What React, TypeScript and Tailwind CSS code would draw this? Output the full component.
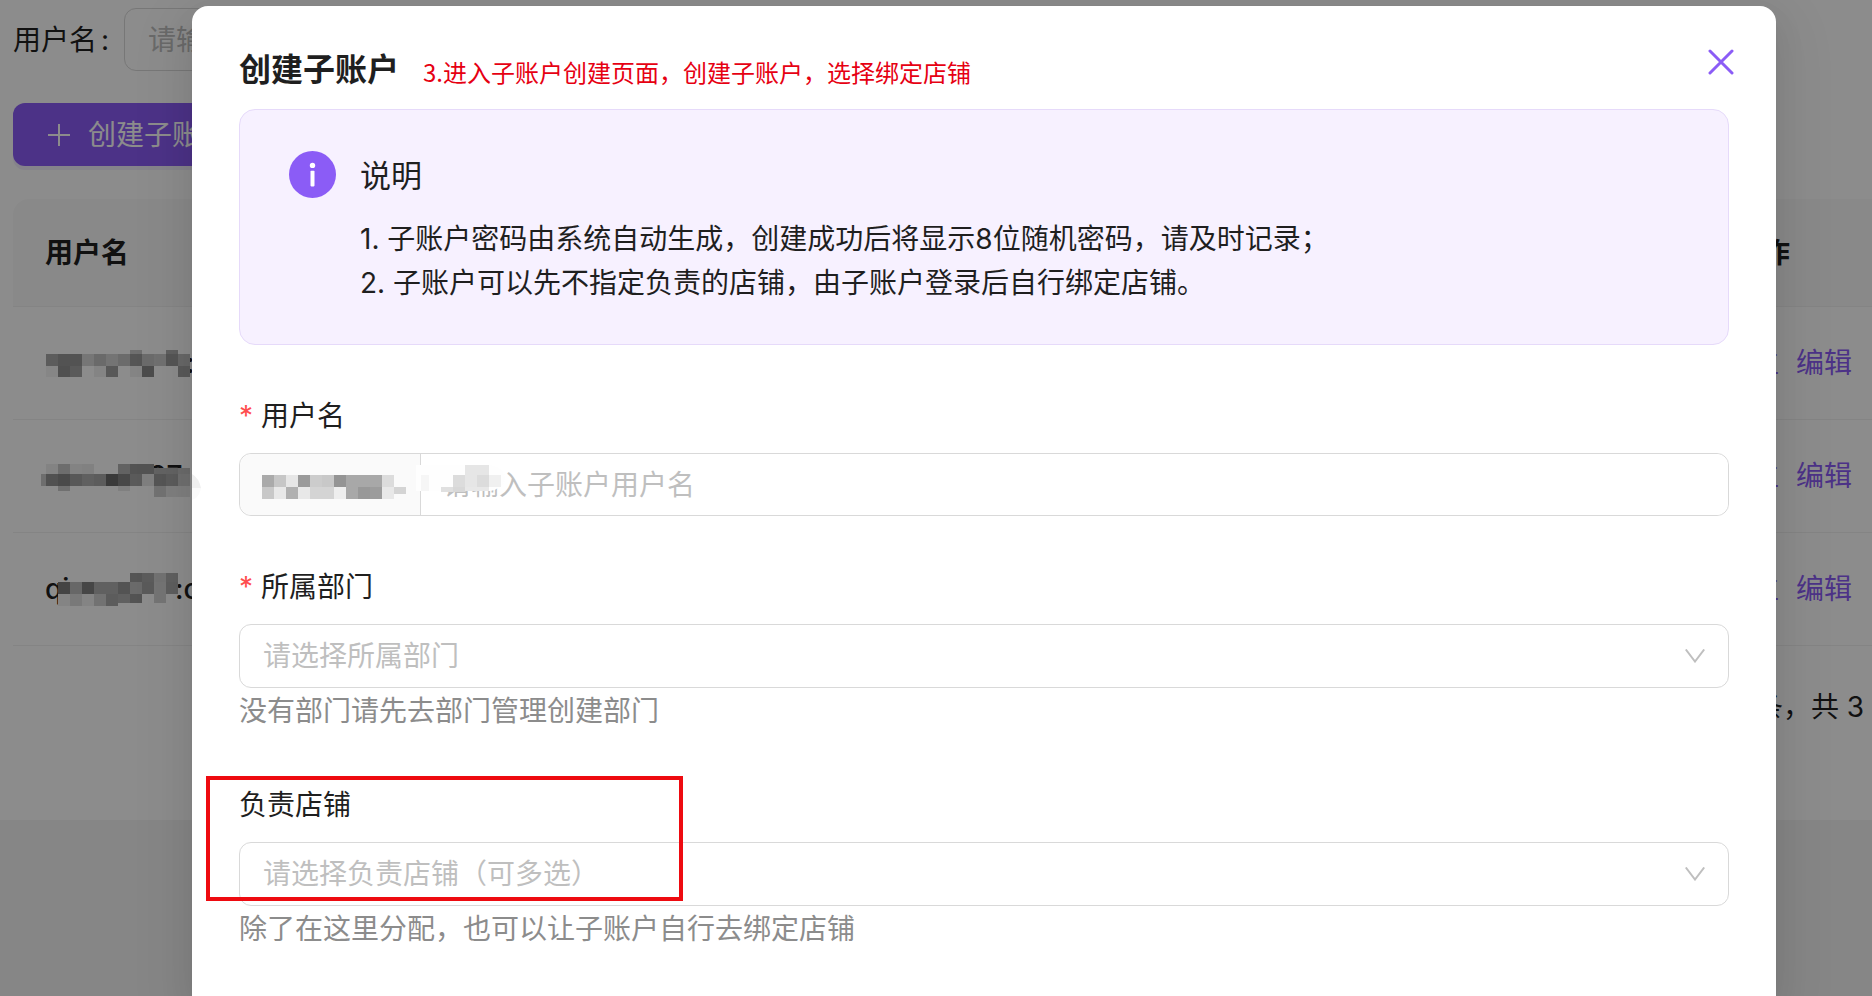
import type { ReactNode } from 'react';

type Band = { x: number; y: number; h: number; cells: string[] };

const CELL = 12;

/* Privacy mosaic: bands of 12px blocks; an empty string leaves a gap. */
function Mosaic({ bands, width, height, className }: { bands: Band[]; width: number; height: number; className: string }) {
  return (
    <svg aria-hidden="true" width={width} height={height} viewBox={`0 0 ${width} ${height}`} shapeRendering="crispEdges" className={className}>
      {bands.map((b, i) =>
        b.cells.map((c, j) =>
          c ? <rect key={`${i}-${j}`} x={b.x + j * CELL} y={b.y} width={CELL} height={b.h} fill={`#${c}${c}${c}`} /> : null,
        ),
      )}
    </svg>
  );
}

const rowMosaics: { bands: Band[]; before?: string; after: string; afterClass: string }[] = [
  {
    after: ':',
    afterClass: 'absolute left-[145px]',
    bands: [
      { x: 5, y: 8, h: 4, cells: ['', '', '', '', '', '', '', 'ca', '', '', 'b0'] },
      { x: 5, y: 12, h: 12, cells: ['a8', '98', '98', 'd7', 'c2', 'd4', 'c4', '9c', 'c4', 'cc', '9c', 'be'] },
      { x: 5, y: 24, h: 11, cells: ['f4', '92', 'a4', '', 'f0', 'a0', '', 'f0', '8a', '', '', 'a4'] },
    ],
  },
  {
    after: '37:',
    afterClass: 'absolute left-[108px]',
    bands: [
      { x: 5, y: 9, h: 10, cells: ['ee', 'c6', 'ee', 'ec', '', '', 'b2', '98', '98'] },
      { x: 113, y: 13, h: 6, cells: ['b4', 'b4', 'c4'] },
      { x: 0, y: 19, h: 12, cells: ['c8'] },
      { x: 5, y: 19, h: 12, cells: ['94', '88', 'a0', 'b0', 'a8', '6a', '84', 'a4', 'e8', '9c', 'a8', 'cc'] },
      { x: 5, y: 31, h: 5, cells: ['', 'cc', '', '', '', '', 'ea', '', '', 'd0', 'e8', 'e8'] },
      { x: 5, y: 36, h: 6, cells: ['', '', '', '', '', '', '', '', '', 'd0', 'e8', 'e8'] },
    ],
  },
  {
    before: 'qi',
    after: ':c',
    afterClass: 'absolute left-[134px]',
    bands: [
      { x: 5, y: 5, h: 9, cells: ['', '', '', '', '', '', '', '9c', 'a8', 'd0', 'b0'] },
      { x: 17, y: 14, h: 12, cells: ['7c', 'bc', '80', 'b0', 'b0', '98', 'c2', 'a4', 'd4', 'ac'] },
      { x: 17, y: 26, h: 9, cells: ['f0', 'dc', 'f0', 'd0', 'a8', 'b0', '98', '', 'd4'] },
      { x: 17, y: 35, h: 3, cells: ['f0', 'dc', 'f0', 'd0', 'a8'] },
    ],
  },
];

const prefixMosaic: Band[] = [
  { x: 0, y: 0, h: 12, cells: ['aa', 'c6', 'e6', '9a', 'cc', 'c8', '94', 'a8', 'a8', 'a8', 'dc'] },
  { x: 0, y: 12, h: 12, cells: ['c8', 'e8', 'b0', 'e8', 'd4', 'd4', 'ee', 'a8', '98', '9c', 'e8'] },
  { x: 132, y: 12, h: 7, cells: ['d4'] },
];

function Chevron() {
  return (
    <svg aria-hidden="true" width="20" height="14" viewBox="0 0 20 14" fill="none" stroke="#bfbfbf" strokeWidth="2" className="pointer-events-none absolute right-6 top-[25px]">
      <path d="M0.8 0.5 L10 12.5 L19.2 0.5" />
    </svg>
  );
}

function FieldLabel({ id, required, children }: { id: string; required?: boolean; children: ReactNode }) {
  return (
    <label htmlFor={id} className="mb-4 flex h-[42px] items-center leading-[42px]">
      {required && <span className="mr-2 w-[14px] font-['Inter',sans-serif] text-[#ff4d4f]">*</span>}
      {children}
    </label>
  );
}

function SelectField({ id, label, required, placeholder, hint, children }: { id: string; label: string; required?: boolean; placeholder: string; hint: string; children?: ReactNode }) {
  return (
    <div className="relative mt-[50px]">
      <FieldLabel id={id} required={required}>{label}</FieldLabel>
      <div className="relative">
        <select id={id} defaultValue="" className="block h-16 w-full appearance-none rounded-xl border border-[#d9d9d9] bg-white pl-[23px] pr-14 text-[#bfbfbf] outline-none">
          <option value="">{placeholder}</option>
        </select>
        <Chevron />
      </div>
      <p className="leading-[46px] text-[#8c8c8c]">{hint}</p>
      {children}
    </div>
  );
}

function AccountsPage() {
  return (
    <main className="h-full bg-[#f5f5f5]">
      <section className="bg-white pb-[92px] pl-[13px] pt-2">
        <div className="flex items-center">
          <label htmlFor="search" className="w-[111px] shrink-0">
            用户名<span className="ml-1">:</span>
          </label>
          <input id="search" placeholder="请输入" className="h-[63px] w-80 rounded-xl border border-[#d9d9d9] bg-white px-[23px] placeholder:text-[#bfbfbf]" />
        </div>
        <button type="button" className="mt-8 flex h-[63px] items-center rounded-xl bg-[#8b5cf6] pl-[34px] pr-8 text-white shadow-[0_4px_0_rgba(139,92,246,0.1)]">
          <svg aria-hidden="true" width="24" height="24" viewBox="0 0 24 24" stroke="currentColor" strokeWidth="2" className="mr-[17px]">
            <path d="M12 1V23M1 12H23" />
          </svg>
          创建子账户
        </button>
        <table className="mt-[33px] w-full border-separate border-spacing-0 text-left">
          <thead>
            <tr className="h-[108px]">
              <th className="rounded-tl-2xl border-b border-[#f0f0f0] bg-[#fafafa] pl-8 font-bold">用户名</th>
              <th className="w-[170px] border-b border-[#f0f0f0] bg-[#fafafa] pl-8 font-bold">操作</th>
            </tr>
          </thead>
          <tbody>
            {rowMosaics.map((row, i) => (
              <tr key={i} className="h-[113px]">
                <td className="border-b border-[#f0f0f0] pl-7">
                  <div className="relative h-[42px] w-[160px] font-medium leading-[42px]">
                    {row.before && <span className="absolute left-1">{row.before}</span>}
                    <span className={row.afterClass}>{row.after}</span>
                    <Mosaic bands={row.bands} width={150} height={42} className="absolute left-0 top-0" />
                  </div>
                </td>
                <td className="border-b border-[#f0f0f0] pl-[21px]">
                  <div className="flex gap-[17px] whitespace-nowrap text-[#8b5cf6]">
                    <a href="#post">岗位</a>
                    <a href="#edit">编辑</a>
                  </div>
                </td>
              </tr>
            ))}
          </tbody>
        </table>
        <p className="-mr-7 whitespace-nowrap pt-10 text-right leading-[42px]">第 1-3 条，共 3 条</p>
      </section>
    </main>
  );
}

function CreateDialog() {
  return (
    <div role="dialog" aria-labelledby="dialog-title" className="relative min-h-full w-full rounded-t-2xl bg-white px-[47px] pt-[42px] shadow-[0_12px_32px_0_rgba(0,0,0,0.08),0_6px_12px_-8px_rgba(0,0,0,0.12),0_18px_56px_16px_rgba(0,0,0,0.05)]">
      <header className="flex h-11 items-center">
        <h2 id="dialog-title" className="text-[32px] font-bold leading-[44px]">创建子账户</h2>
        <p className="ml-6 mt-1 font-['Noto_Sans_CJK_SC',sans-serif] text-2xl text-[#e60012]">3.进入子账户创建页面，创建子账户，选择绑定店铺</p>
        <button type="button" aria-label="关闭" className="-mr-2 mb-4 ml-auto flex size-8 items-center justify-center text-[#8b5cf6]">
          <svg aria-hidden="true" width="26" height="26" viewBox="0 0 26 26" fill="none" stroke="currentColor" strokeWidth="3" strokeLinecap="round">
            <path d="M2 2L24 24M24 2L2 24" />
          </svg>
        </button>
      </header>

      <section className="mt-[17px] flex gap-6 rounded-2xl border border-[#e6dafa] bg-[#f7f1ff] pb-[39px] pl-[49px] pr-8 pt-11">
        <svg aria-hidden="true" width="47" height="47" viewBox="0 0 47 47" className="-mt-[3px] shrink-0">
          <circle cx="23.5" cy="23.5" r="23.5" fill="#8b5cf6" />
          <circle cx="23.5" cy="14.4" r="2.7" fill="#fff" />
          <rect x="21.5" y="19.8" width="4" height="15.6" rx="0.8" fill="#fff" />
        </svg>
        <div>
          <h3 className="text-[31px] leading-[44px]">说明</h3>
          <div className="mt-[19px] leading-[44px]">
            <p>1. 子账户密码由系统自动生成，创建成功后将显示8位随机密码，请及时记录；</p>
            <p>2. 子账户可以先不指定负责的店铺，由子账户登录后自行绑定店铺。</p>
          </div>
        </div>
      </section>

      <form>
        <div className="mt-[50px]">
          <FieldLabel id="username" required>用户名</FieldLabel>
          <div className="relative flex h-[63px] rounded-xl border border-[#d9d9d9]">
            <div className="flex w-[181px] shrink-0 items-center rounded-l-xl border-r border-[#d9d9d9] bg-[#fafafa] pl-[22px]">
              <Mosaic bands={prefixMosaic} width={144} height={24} className="mt-1" />
            </div>
            <input id="username" placeholder="请输入子账户用户名" className="min-w-0 flex-1 rounded-r-xl bg-white px-[22px] outline-none placeholder:text-[#bfbfbf]" />
            <svg aria-hidden="true" width="96" height="30" viewBox="0 0 96 30" className="absolute left-[176px] top-[10px]">
              <path d="M0 1L74 1Q88 4 89 15Q86 25 74 27L0 27Z" fill="#fefefe" />
              <g shapeRendering="crispEdges">
                <rect x="5" y="11" width="8" height="16" fill="#f6f6f6" />
                <rect x="49" y="1" width="24" height="10" fill="#e6e6e6" />
                <rect x="37" y="11" width="12" height="12" fill="#dcdcdc" />
                <rect x="49" y="11" width="12" height="12" fill="#e6e6e6" />
                <rect x="61" y="11" width="12" height="12" fill="#dcdcdc" />
                <rect x="73" y="11" width="12" height="12" fill="#f0f0f0" />
                <rect x="25" y="23" width="12" height="5" fill="#e0e0e0" />
                <rect x="37" y="23" width="12" height="5" fill="#d8d8d8" />
                <rect x="49" y="23" width="24" height="4" fill="#e8e8e8" />
              </g>
            </svg>
          </div>
        </div>
        <SelectField id="department" label="所属部门" required placeholder="请选择所属部门" hint="没有部门请先去部门管理创建部门" />
        <SelectField id="stores" label="负责店铺" placeholder="请选择负责店铺（可多选）" hint="除了在这里分配，也可以让子账户自行去绑定店铺">
          <div className="pointer-events-none absolute -left-[33px] -top-2 h-[125px] w-[477px] border-4 border-[#ee0a10]" />
        </SelectField>
      </form>

      <svg aria-hidden="true" width="10" height="28" viewBox="0 0 10 28" className="absolute left-0 top-[468px]">
        <path d="M0 0Q7 4 9 14H0Z" fill="#efefef" />
        <path d="M0 14H9Q8 20 4 24L0 26Z" fill="#fafafa" />
      </svg>
    </div>
  );
}

export default function App() {
  return (
    <div className="relative h-screen overflow-hidden font-['Inter','Noto_Sans_CJK_SC',sans-serif] text-[28px] leading-[42px] text-[#1f1f1f]">
      <AccountsPage />
      <div className="absolute inset-0 overflow-hidden bg-black/45 pl-48 pr-24 pt-1.5">
        <CreateDialog />
      </div>
    </div>
  );
}
